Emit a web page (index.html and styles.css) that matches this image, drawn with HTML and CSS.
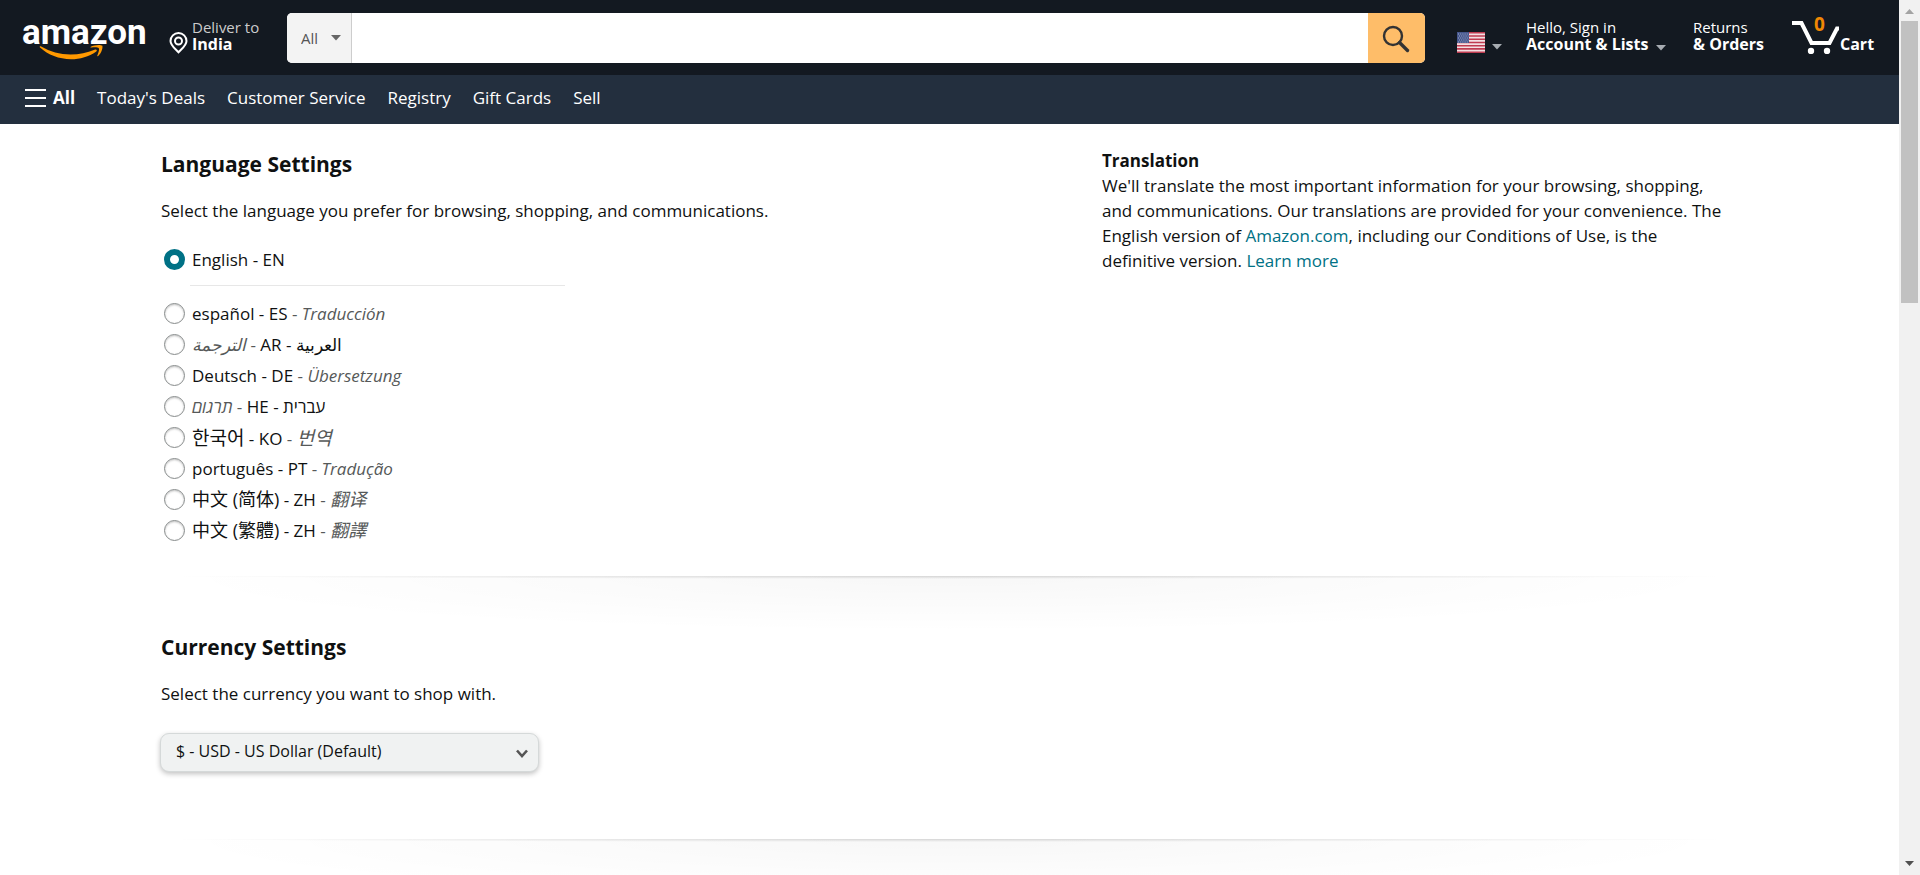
FILE: index.html
```html
<!DOCTYPE html>
<html lang="en">
<head>
<meta charset="utf-8">
<title>Language and Currency Settings</title>
<link rel="stylesheet" href="styles.css">
</head>
<body>
<div class="shell">
  <div class="page">
    <header class="topbar">
      <a class="logo" href="#" aria-label="amazon">
        <span class="logo-word">amazon</span>
        <svg class="logo-smile" viewBox="0 0 66 18" width="66" height="18" aria-hidden="true">
          <path fill="#ff9900" d="M1 3.600C.2 2.800 1 1.900 2.200 2.600C11 7.700 21 10.600 31.500 10.600C40.500 10.600 48 8.800 55.500 5.700C57.500 4.900 58.800 6.500 57 7.700C50 12.600 41 15.200 32 15.200C20 15.200 9 11 1 3.600Z"/>
          <path fill="#ff9900" d="M51.800 2.800C54.500.9 61.500.3 63.200 1.600C64.300 3 62.500 9.500 59.200 12.100C58.600 12.600 58 12.300 58.300 11.600C59.300 9 60.600 5.300 59.800 4.200C59 3.100 55 3.300 52.300 3.600C51.500 3.700 51.200 3.200 51.800 2.800Z"/>
        </svg>
      </a>
      <a class="deliver" href="#">
        <svg class="pin" viewBox="0 0 19 22" width="19" height="22" fill="none" stroke="#fff" stroke-width="2" aria-hidden="true">
          <path d="M9.500 20.300C6 16.500 1.500 13.400 1.500 9A8 8 0 0 1 17.500 9C17.500 13.400 13 16.500 9.500 20.300Z"/>
          <circle cx="9.500" cy="9" r="3.500"/>
        </svg>
        <span class="two-line"><span class="small muted">Deliver to</span><b>India</b></span>
      </a>
      <form class="search" role="search">
        <div class="scope">
          <select class="scope-select" aria-label="Search in"><option>All</option></select>
          <svg class="scope-caret" viewBox="0 0 10 6" width="10" height="6" aria-hidden="true"><path fill="#666" d="M0 0H10L5 5.500Z"/></svg>
        </div>
        <input class="search-input" type="text" aria-label="Search Amazon">
        <button class="search-button" type="button" aria-label="Go">
          <svg viewBox="0 0 28 28" width="28" height="28" fill="none" stroke="#333" aria-hidden="true">
            <circle cx="11" cy="11" r="9" stroke-width="2.400"/>
            <path d="M17.500 17.500L25.500 25.500" stroke-width="3.400" stroke-linecap="round"/>
          </svg>
        </button>
      </form>
      <nav class="tools" aria-label="Account">
        <a class="locale" href="#" aria-label="Choose a language">
          <svg viewBox="0 0 28 21" width="28" height="21" aria-hidden="true">
            <path fill="#f3dfe2" d="M0 0H28V21H0Z"/>
            <path stroke="#bf3b50" stroke-width="1.600" d="M0 .8H28M0 4H28M0 7.200H28M0 10.500H28M0 13.700H28M0 16.900H28M0 20.200H28"/>
            <path fill="#45568c" d="M0 0H12V11H0Z"/>
            <path stroke="#a3adcb" stroke-width="1" stroke-dasharray="1 1.200" d="M1 2H11.500M2 4H11.500M1 6H11.500M2 8H11.500M1 10H11.500"/>
          </svg>
          <svg class="caret" viewBox="0 0 10 6" width="10" height="6" aria-hidden="true"><path fill="#a7acb2" d="M0 0H10L5 5.500Z"/></svg>
        </a>
        <a class="account" href="#">
          <span class="two-line"><span class="small">Hello, Sign in</span><b>Account &amp; Lists</b></span>
          <svg class="caret" viewBox="0 0 10 6" width="10" height="6" aria-hidden="true"><path fill="#a7acb2" d="M0 0H10L5 5.500Z"/></svg>
        </a>
        <a class="returns two-line" href="#"><span class="small">Returns</span><b>&amp; Orders</b></a>
        <a class="cart" href="#">
          <span class="cart-icon">
            <svg viewBox="0 0 48 34" width="48" height="34" aria-hidden="true">
              <path fill="none" stroke="#fff" stroke-width="4" d="M0 3H9.500L19.500 23H37.500L45 8.500H47"/>
              <circle cx="19" cy="31" r="3.200" fill="#fff"/><circle cx="35" cy="31" r="3.200" fill="#fff"/>
            </svg>
            <span class="cart-count">0</span>
          </span>
          <b>Cart</b>
        </a>
      </nav>
    </header>

    <nav class="subnav" aria-label="Shop">
      <a class="all" href="#">
        <svg viewBox="0 0 21 19" width="21" height="19" aria-hidden="true"><path stroke="#fff" stroke-width="2" d="M0 2H21M0 10H21M0 18H21"/></svg>
        <b>All</b>
      </a>
      <a href="#">Today's Deals</a>
      <a href="#">Customer Service</a>
      <a href="#">Registry</a>
      <a href="#">Gift Cards</a>
      <a href="#">Sell</a>
    </nav>

    <main class="content">
      <section class="language">
        <form class="language-form">
          <h1 class="heading">Language Settings</h1>
          <p class="lead">Select the language you prefer for browsing, shopping, and communications.</p>
          <div class="options">
            <label class="option"><input type="radio" name="lang" checked><span>English - EN</span></label>
            <hr class="rule">
            <label class="option"><input type="radio" name="lang"><span>español - ES <span class="alt">- <i>Traducción</i></span></span></label>
            <label class="option"><input type="radio" name="lang"><span><span class="alt"><i lang="ar">الترجمة</i> -</span> AR - <span lang="ar">العربية</span></span></label>
            <label class="option"><input type="radio" name="lang"><span>Deutsch - DE <span class="alt">- <i>Übersetzung</i></span></span></label>
            <label class="option"><input type="radio" name="lang"><span><span class="alt"><i lang="he">תרגום</i> -</span> HE - <span lang="he">עברית</span></span></label>
            <label class="option"><input type="radio" name="lang"><span><span lang="ko">한국어</span> - KO <span class="alt">- <i lang="ko">번역</i></span></span></label>
            <label class="option"><input type="radio" name="lang"><span>português - PT <span class="alt">- <i>Tradução</i></span></span></label>
            <label class="option"><input type="radio" name="lang"><span><span lang="zh-Hans">中文 (简体)</span> - ZH <span class="alt">- <i lang="zh-Hans">翻译</i></span></span></label>
            <label class="option"><input type="radio" name="lang"><span><span lang="zh-Hant">中文 (繁體)</span> - ZH <span class="alt">- <i lang="zh-Hant">翻譯</i></span></span></label>
          </div>
        </form>
        <aside class="note">
          <b>Translation</b>
          <p>We'll translate the most important information for your browsing, shopping, and communications. Our translations are provided for your convenience. The English version of <a href="#">Amazon.com</a>, including our Conditions of Use, is the definitive version. <a href="#">Learn more</a></p>
        </aside>
      </section>

      <section class="currency shaded">
        <h2 class="heading">Currency Settings</h2>
        <p class="lead" id="currency-label">Select the currency you want to shop with.</p>
        <div class="dropdown">
          <select class="dropdown-select" aria-labelledby="currency-label"><option>$ - USD - US Dollar (Default)</option></select>
          <svg class="dropdown-caret" viewBox="0 0 12 9" width="12" height="9" fill="none" stroke="#555" stroke-width="2.600" aria-hidden="true"><path d="M1 1.500L6 7L11 1.500"/></svg>
        </div>
      </section>
      <div class="footer-gap shaded"></div>
    </main>
  </div>

  <div class="scrollbar" aria-hidden="true">
    <svg viewBox="0 0 9 5" width="9" height="5"><path fill="#a3a3a3" d="M0 5H9L4.500 0Z"/></svg>
    <div class="thumb"></div>
    <svg viewBox="0 0 9 5" width="9" height="5"><path fill="#505050" d="M0 0H9L4.500 5Z"/></svg>
  </div>
</div>
</body>
</html>
```
FILE: styles.css
```css
* { box-sizing: border-box; }

body {
  margin: 0;
  background: #fff;
  color: #0f1111;
  font: 17px/25px "Open Sans", "Noto Sans", "Noto Sans CJK SC", sans-serif;
}

a { color: #007185; text-decoration: none; }
b { font-weight: 700; }
svg { display: block; flex: none; }
select, input, button { font: inherit; color: inherit; margin: 0; }

.shell {
  display: grid;
  grid-template-columns: minmax(0, 1fr) 21px;
  height: 100vh;
}
.page { overflow: hidden; }

/* top bar */
.topbar {
  display: flex;
  height: 75px;
  background: #131921;
}
.topbar a { color: #fff; }

.logo {
  position: relative;
  width: 121px;
  margin: 14px 26px 0 22px;
}
.logo-word {
  display: block;
  font: bold 35px/38px "Roboto", sans-serif;
}
.logo-smile { position: absolute; left: 17px; top: 30px; }

.two-line {
  display: flex;
  flex-direction: column;
  font-size: 16px;
  line-height: 17px;
  white-space: nowrap;
}
.small { font-size: 15px; }
.muted { color: #ccc; }

.deliver { display: flex; gap: 4px; width: 118px; padding-top: 19px; }
.pin { margin-top: 13px; }

.search {
  display: flex;
  flex: 1;
  height: 50px;
  margin-top: 13px;
  border-radius: 5px;
  overflow: hidden;
  background: #fff;
}
.scope { position: relative; width: 65px; border-right: 1px solid #cdcdcd; }
.scope-select {
  appearance: none;
  width: 100%;
  height: 100%;
  padding: 0 0 0 14px;
  border: 0;
  border-radius: 0;
  background: #f3f3f3;
  color: #555;
  font-size: 15px;
}
.scope-caret { position: absolute; right: 10px; top: 22px; }
.search-input { flex: 1; min-width: 0; border: 0; padding: 0 10px; outline: 0; }
.search-button {
  display: flex;
  width: 57px;
  padding: 12px 0 0 14px;
  border: 0;
  background: #febd69;
}

.tools { display: flex; width: 474px; padding: 19px 0 0 32px; }
.locale { display: flex; gap: 7px; width: 69px; padding-top: 13px; }
.caret { margin-top: 12px; }
.account { display: flex; gap: 8px; width: 167px; }
.account .caret { margin-top: 26px; }
.returns { width: 99px; }
.cart { display: flex; font-size: 16px; line-height: 17px; }
.cart-icon { position: relative; padding-top: 1px; }
.cart-count {
  position: absolute;
  left: 22px;
  top: -3px;
  color: #f08804;
  font-size: 19px;
  font-weight: 700;
}
.cart b { padding-top: 17px; }

/* category bar */
.subnav {
  display: flex;
  align-items: center;
  gap: 22px;
  height: 49px;
  padding: 0 25px 4px;
  background: #232f3e;
}
.subnav a { color: #fff; }
.all { display: flex; align-items: center; gap: 7px; }

/* settings */
.content { max-width: 1577px; margin: 0 auto; }
.heading {
  margin: 0;
  font-size: 21px;
  font-weight: 700;
  line-height: 32px;
}
.lead { margin: 18px 0 0; }
.language { display: flex; height: 452px; padding-top: 24px; }
.language-form { flex: 1; }
.note { width: 636px; padding: 0 8px 0 0; }
.note p { margin: 0; }

.options { padding: 21px 0 0 3px; }
.option { display: flex; align-items: center; gap: 7px; height: 31px; white-space: nowrap; }
.option input {
  appearance: none;
  width: 21px;
  height: 21px;
  border: 1px solid #888c8c;
  border-radius: 50%;
  background: #fff;
  box-shadow: inset 0 1px 2px rgba(15, 17, 17, .25);
}
.option input:checked { border: 6px solid #007185; box-shadow: none; }
.rule { width: 375px; height: 1px; margin: 10px 0 12px 26px; border: 0; background: #e7e7e7; }
.alt { color: #565959; }
[lang="ko"] { font-family: "Noto Sans CJK KR", sans-serif; font-size: 19px; }
[lang="zh-Hans"] { font-family: "Open Sans", "Noto Sans CJK SC", sans-serif; font-size: 18px; }
[lang="zh-Hant"] { font-family: "Open Sans", "Noto Sans CJK TC", sans-serif; font-size: 18px; }

.shaded {
  background:
    radial-gradient(ellipse 50% 100% at 50% 0, rgba(0, 0, 0, .14), transparent) top / 100% 3px no-repeat,
    radial-gradient(ellipse 50% 100% at 50% 0, rgba(0, 0, 0, .03), transparent) top / 100% 56px no-repeat;
}
.currency { height: 263px; padding-top: 55px; }
.footer-gap { height: 60px; }

.dropdown { position: relative; width: 379px; margin: 27px 0 0 -1px; }
.dropdown-select {
  appearance: none;
  display: block;
  width: 100%;
  height: 39px;
  padding: 0 15px 2px;
  border: 1px solid #d5d9d9;
  border-radius: 9px;
  background: #f0f2f2;
  box-shadow: 0 2px 5px rgba(15, 17, 17, .25);
  font-size: 16px;
}
.dropdown-caret { position: absolute; right: 11px; top: 16px; }

/* scroll track */
.scrollbar {
  display: flex;
  flex-direction: column;
  align-items: center;
  padding: 9px 0;
  background: #f1f1f1;
}
.thumb { width: 17px; height: 282px; margin: 7px 0 auto; background: #c1c1c1; }
```
